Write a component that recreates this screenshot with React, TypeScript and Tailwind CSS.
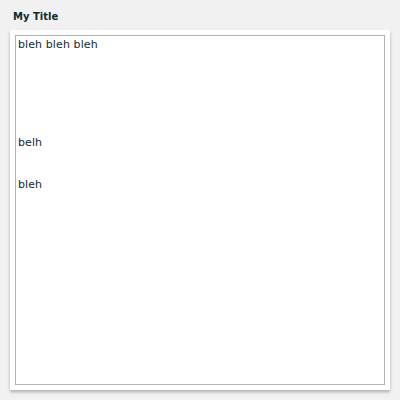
export default function App() {
  return (
    <div className="h-[400px] w-[400px] bg-[#f1f1f1] px-[10px] pt-[11px] font-['DejaVu_Sans',Verdana,sans-serif] text-[#0f2b33]">
      <h2 className="h-[19px] pl-[3px] text-[10px] font-bold leading-[12px]">My Title</h2>
      <div className="h-[360px] bg-white p-[5px] shadow-[0_2px_3px_rgba(0,0,0,0.28)]">
        <div className="h-[350px] border border-[#b4b4b4] pl-[2px] pt-[2px] text-[11px] leading-[14px] tracking-[0.1px]">
          bleh bleh bleh
          <br />
          <br />
          <br />
          <br />
          <br />
          <br />
          <br />
          belh
          <br />
          <br />
          <br />
          bleh
        </div>
      </div>
    </div>
  )
}
